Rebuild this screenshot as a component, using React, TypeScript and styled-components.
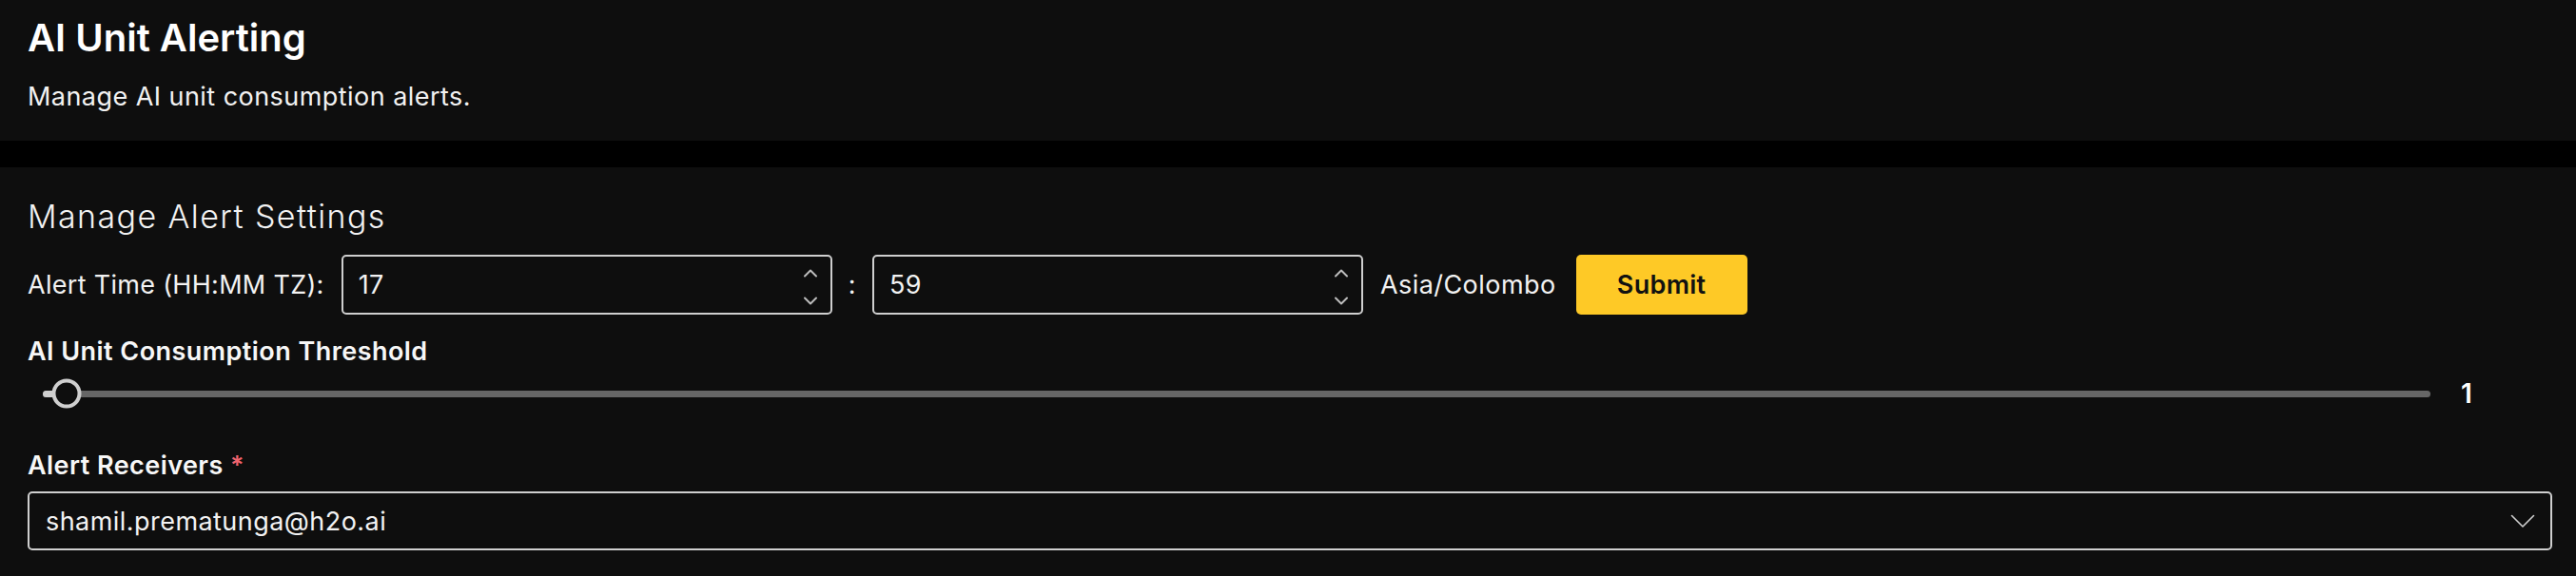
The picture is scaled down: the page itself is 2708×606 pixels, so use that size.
import React, {useState} from 'react';
import styled, {createGlobalStyle} from 'styled-components';

const GlobalStyle = createGlobalStyle`
  html, body {
    margin: 0;
    padding: 0;
    background: #000;
  }
  body {
    font-family: Inter, "Noto Sans", sans-serif;
    color: #f2f2f2;
  }
  * {
    box-sizing: border-box;
  }
`;

const ChevronUp = () => (
    <svg width="16" height="10" viewBox="0 0 16 10" fill="none">
        <path d="M2 8.5 L8 2.5 L14 8.5" stroke="#bdbdbd" strokeWidth="2" strokeLinecap="round" strokeLinejoin="round"/>
    </svg>
);

const ChevronDown = () => (
    <svg width="16" height="10" viewBox="0 0 16 10" fill="none">
        <path d="M2 1.5 L8 7.5 L14 1.5" stroke="#bdbdbd" strokeWidth="2" strokeLinecap="round" strokeLinejoin="round"/>
    </svg>
);

const SelectChevron = () => (
    <svg width="26" height="15" viewBox="0 0 26 15" fill="none">
        <path d="M1.5 1.5 L13 13 L24.5 1.5" stroke="#cfcfcf" strokeWidth="1.6" strokeLinecap="round" strokeLinejoin="round"/>
    </svg>
);

type NumberFieldProps = {
    value: string;
    onChange: (v: string) => void;
};

// 숫자 입력 + 커스텀 스피너
const NumberField: React.FC<NumberFieldProps> = ({value, onChange}) => {
    const step = (d: number) => {
        const n = parseInt(value || '0', 10) + d;
        onChange(String(n));
    };
    return (
        <FieldBox>
            <FieldInput value={value} inputMode="numeric" onChange={e => onChange(e.target.value)}/>
            <Spinner>
                <SpinButton type="button" onClick={() => step(1)}><ChevronUp/></SpinButton>
                <SpinButton type="button" onClick={() => step(-1)}><ChevronDown/></SpinButton>
            </Spinner>
        </FieldBox>
    );
};

export default function App() {
    const [hour, setHour] = useState('17');
    const [minute, setMinute] = useState('59');
    const [threshold] = useState(1);
    const max = 100;

    return (
        <>
            <GlobalStyle/>
            <Page>
                <HeaderPanel>
                    <Title>AI Unit Alerting</Title>
                    <Subtitle>Manage AI unit consumption alerts.</Subtitle>
                </HeaderPanel>

                <SettingsPanel>
                    <SectionTitle>Manage Alert Settings</SectionTitle>

                    <TimeRow>
                        <RowLabel>Alert Time (HH:MM TZ):</RowLabel>
                        <NumberField value={hour} onChange={setHour}/>
                        <Colon>:</Colon>
                        <NumberField value={minute} onChange={setMinute}/>
                        <Zone>Asia/Colombo</Zone>
                        <SubmitButton type="button">Submit</SubmitButton>
                    </TimeRow>

                    <FieldLabel $top={19}>AI Unit Consumption Threshold</FieldLabel>
                    <SliderRow>
                        <Track>
                            <TrackFill style={{width: `${(threshold / max) * 100}%`}}/>
                            <Thumb style={{left: `${(threshold / max) * 100}%`}}/>
                        </Track>
                        <SliderValue>{threshold}</SliderValue>
                    </SliderRow>

                    <FieldLabel $top={40}>
                        Alert Receivers <Required>*</Required>
                    </FieldLabel>
                    <SelectBox>
                        <SelectText>shamil.prematunga@h2o.ai</SelectText>
                        <SelectChevron/>
                    </SelectBox>
                </SettingsPanel>
            </Page>
        </>
    );
}

// --------------------------------------
// styled-components
// --------------------------------------

const Page = styled.div`
  min-height: 100vh;
  display: flex;
  flex-direction: column;
  gap: 28px;
  background: #000;
`;

const Panel = styled.section`
  background: #0e0e0e;
  padding-left: 29px;
  padding-right: 25px;
  letter-spacing: 0.45px;
`;

const HeaderPanel = styled(Panel)`
  height: 148px;
  padding-top: 16px;
`;

const Title = styled.h1`
  margin: 0;
  font-size: 40px;
  line-height: 48px;
  font-weight: 600;
  letter-spacing: 0;
  color: #fff;
`;

const Subtitle = styled.p`
  margin: 18px 0 0;
  font-size: 27px;
  line-height: 40px;
  font-weight: 400;
`;

const SettingsPanel = styled(Panel)`
  flex: 1;
  padding-top: 32px;
  padding-bottom: 40px;
`;

const SectionTitle = styled.h2`
  margin: 0;
  font-size: 34px;
  line-height: 40px;
  font-weight: 300;
  letter-spacing: 1.4px;
`;

const TimeRow = styled.div`
  margin-top: 20px;
  display: flex;
  align-items: center;
  gap: 18px;
  height: 63px;
  font-size: 27px;
`;

const RowLabel = styled.span`
  white-space: nowrap;
  letter-spacing: 0.3px;
`;

const FieldBox = styled.div`
  width: 516px;
  height: 63px;
  display: flex;
  align-items: center;
  border: 2px solid #cfcfcf;
  border-radius: 5px;
  background: #0e0e0e;
  padding: 0 13px 0 16px;
`;

const FieldInput = styled.input`
  flex: 1;
  min-width: 0;
  border: 0;
  outline: none;
  background: transparent;
  color: #f2f2f2;
  font-family: inherit;
  font-size: 27px;
  letter-spacing: 0.45px;
  padding: 0;
`;

const Spinner = styled.div`
  display: flex;
  flex-direction: column;
  gap: 20px;
  padding-top: 4px;
`;

const SpinButton = styled.button`
  display: flex;
  padding: 0;
  border: 0;
  background: none;
  cursor: pointer;
`;

const Colon = styled.span`
  margin: 0 -1px;
`;

const Zone = styled.span`
  white-space: nowrap;
`;

const SubmitButton = styled.button`
  margin-left: 3px;
  width: 180px;
  height: 63px;
  border: 0;
  border-radius: 5px;
  background: #fec926;
  color: #111;
  font-family: inherit;
  font-size: 27px;
  font-weight: 600;
  letter-spacing: 0.3px;
  cursor: pointer;
`;

const FieldLabel = styled.div<{ $top: number }>`
  margin-top: ${({$top}) => $top}px;
  font-size: 27px;
  line-height: 40px;
  font-weight: 600;
  color: #f7f7f7;
`;

const Required = styled.span`
  color: #f0646e;
`;

const SliderRow = styled.div`
  margin-top: 8px;
  height: 32px;
  display: flex;
  align-items: center;
  padding-left: 16px;
`;

const Track = styled.div`
  position: relative;
  flex: 1;
  height: 7px;
  border-radius: 4px;
  background: #666;
`;

const TrackFill = styled.div`
  height: 100%;
  border-radius: 4px 0 0 4px;
  background: #cfcfcf;
`;

const Thumb = styled.div`
  position: absolute;
  top: 50%;
  width: 31px;
  height: 31px;
  border-radius: 50%;
  border: 4px solid #cfcfcf;
  background: #0e0e0e;
  transform: translate(-50%, -50%);
`;

const SliderValue = styled.span`
  width: 128px;
  padding-left: 32px;
  font-size: 28px;
  font-weight: 600;
  color: #fff;
`;

const SelectBox = styled.div`
  margin-top: 7px;
  height: 62px;
  display: flex;
  align-items: center;
  justify-content: space-between;
  border: 2px solid #cfcfcf;
  border-radius: 5px;
  padding: 0 16px 0 17px;
  cursor: pointer;
`;

const SelectText = styled.span`
  font-size: 27px;
  color: #f2f2f2;
`;
